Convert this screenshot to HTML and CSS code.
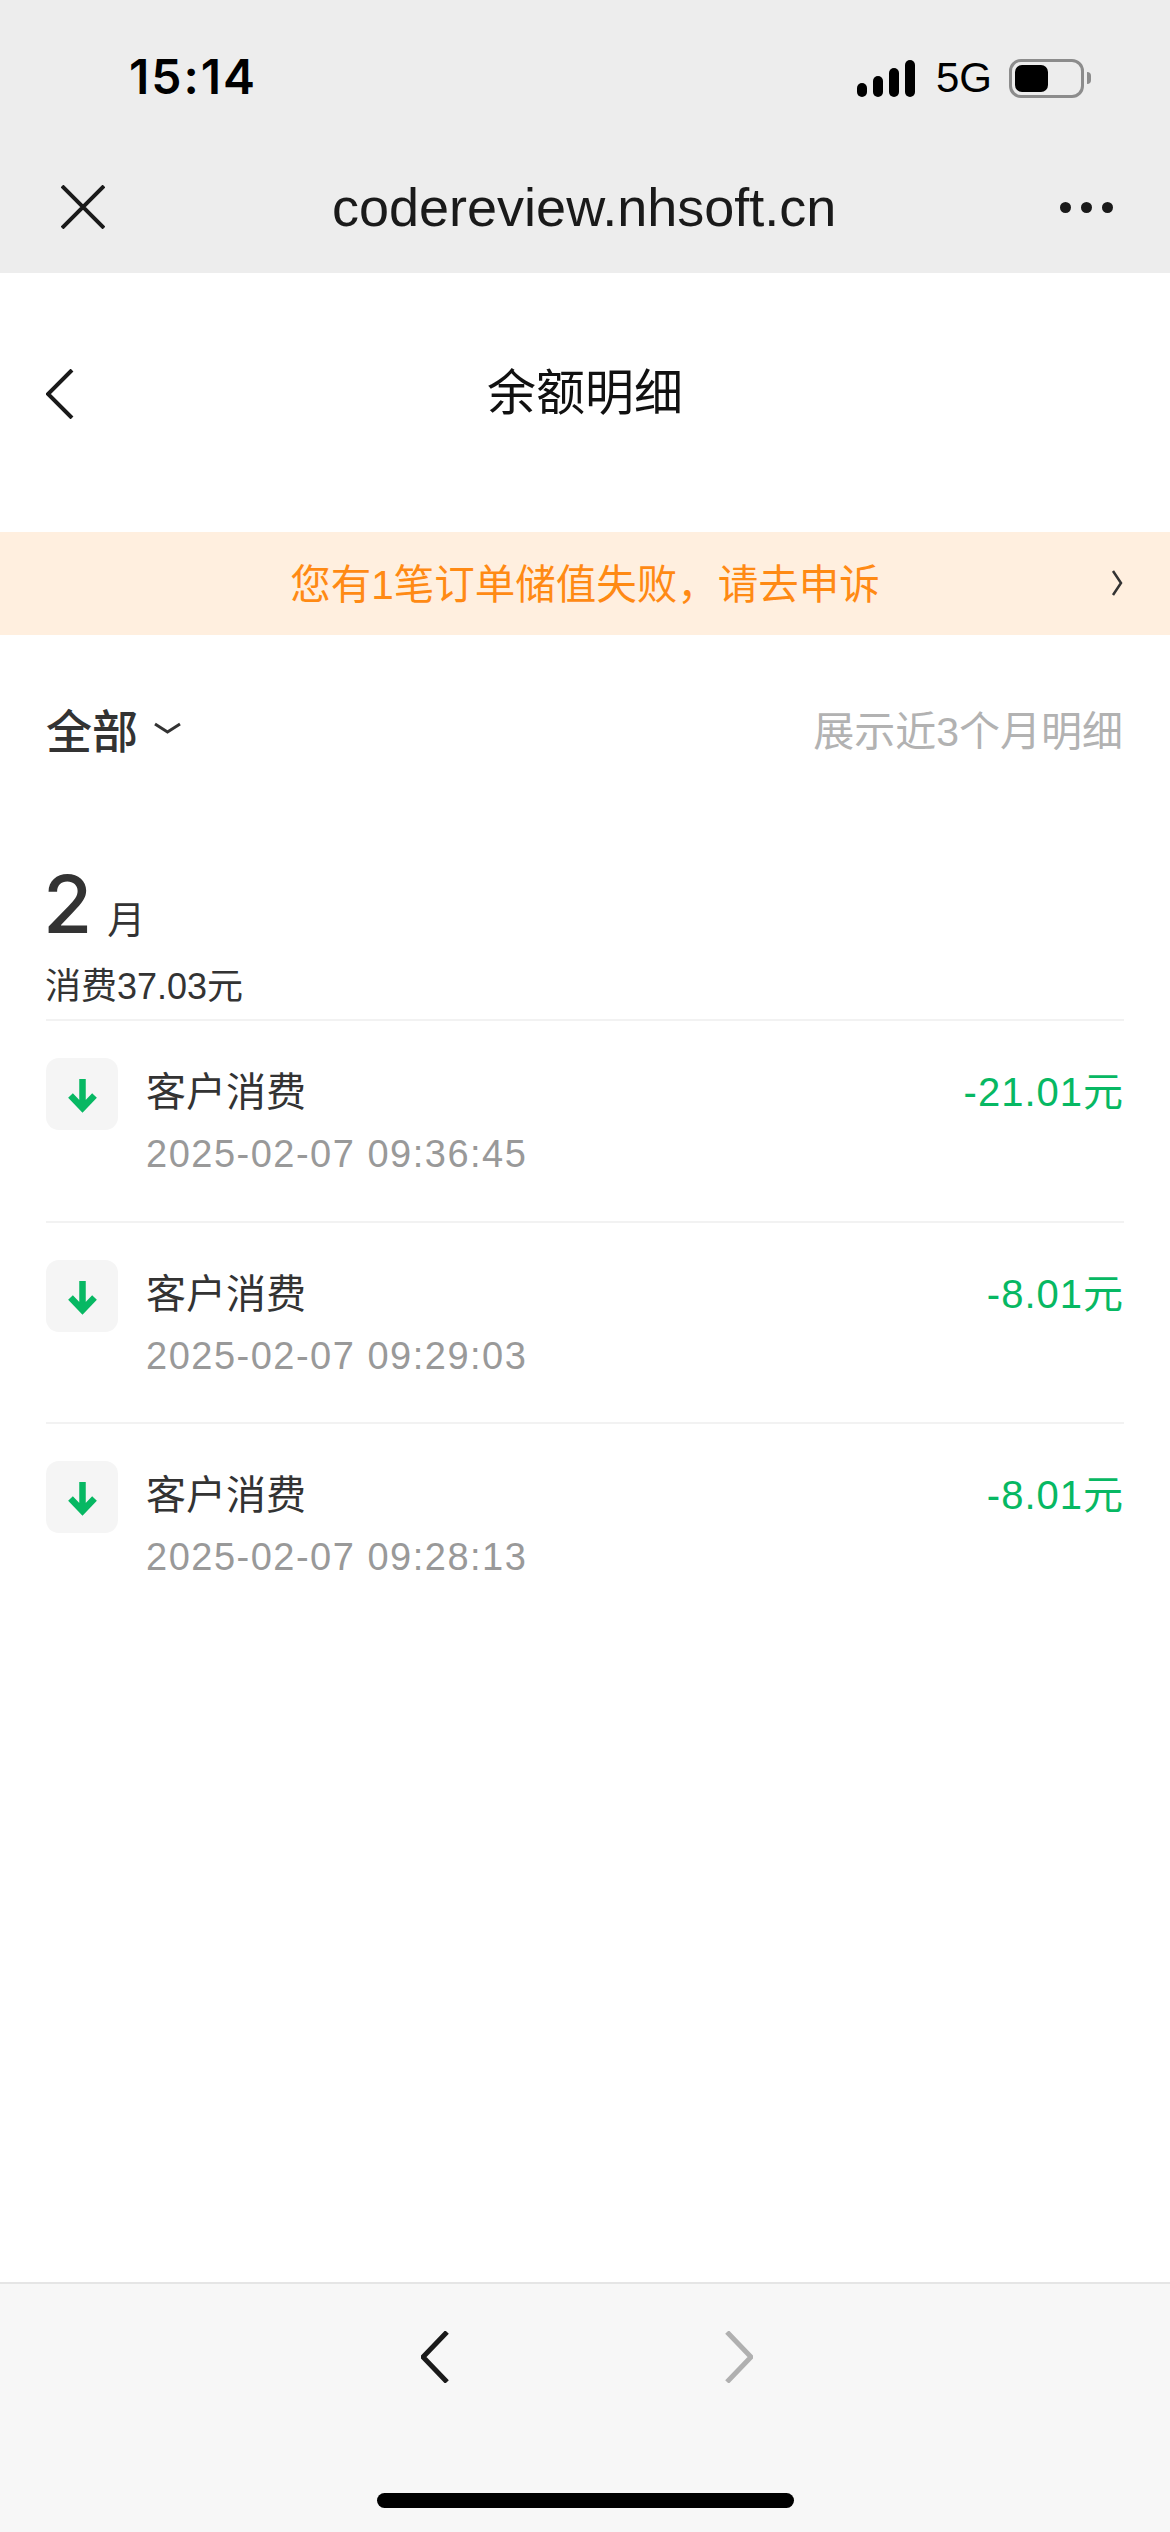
FILE: index.html
```html
<!DOCTYPE html>
<html lang="zh-CN">
<head>
<meta charset="utf-8">
<title>余额明细</title>
<link rel="stylesheet" href="styles.css">
</head>
<body>
<div class="app">
  <header class="browser-bar">
    <div class="status">
      <span class="clock">15:14</span>
      <div class="status-icons">
        <svg class="signal" width="58" height="37" viewBox="0 0 58 37"><rect x="0" y="23" width="10" height="14" rx="5"/><rect x="16" y="16" width="10" height="21" rx="5"/><rect x="32" y="8" width="10" height="29" rx="5"/><rect x="48" y="0" width="10" height="37" rx="5"/></svg>
        <span class="network">5G</span>
        <div class="battery"><div class="battery-body"><div class="battery-level"></div></div><div class="battery-nub"></div></div>
      </div>
    </div>
    <div class="urlbar">
      <svg class="close" width="44" height="44" viewBox="0 0 44 44"><path d="M1 1 43 43M43 1 1 43"/></svg>
      <span class="host">codereview.nhsoft.cn</span>
      <div class="dots"><i></i><i></i><i></i></div>
    </div>
  </header>

  <main class="page">
    <div class="title-bar">
      <svg class="back" width="28" height="50" viewBox="0 0 28 50"><path d="M26 1 2 25 26 49"/></svg>
      <h1>余额明细</h1>
    </div>

    <div class="notice">
      <span>您有1笔订单储值失败，请去申诉</span>
      <svg class="notice-arrow" width="12" height="26" viewBox="0 0 12 26"><path d="M2 1 10 13 2 25"/></svg>
    </div>

    <div class="filter">
      <div class="filter-pick"><span>全部</span><svg width="27" height="12" viewBox="0 0 27 12"><path d="M1 2 13.5 10 26 2"/></svg></div>
      <span class="filter-note">展示近3个月明细</span>
    </div>

    <section class="month">
      <div class="month-head"><span class="month-num">2</span><span class="month-unit">月</span></div>
      <div class="month-sum">消费37.03元</div>
    </section>

    <ul class="records">
      <li class="record">
        <div class="record-icon"><svg width="72" height="72" viewBox="0 0 72 72"><path d="M36.5 21V50M24.5 37.5 36.5 50 48.5 37.5"/></svg></div>
        <div class="record-text"><div class="record-name">客户消费</div><div class="record-time">2025-02-07 09:36:45</div></div>
        <div class="record-amount">-21.01元</div>
      </li>
      <li class="record">
        <div class="record-icon"><svg width="72" height="72" viewBox="0 0 72 72"><path d="M36.5 21V50M24.5 37.5 36.5 50 48.5 37.5"/></svg></div>
        <div class="record-text"><div class="record-name">客户消费</div><div class="record-time">2025-02-07 09:29:03</div></div>
        <div class="record-amount">-8.01元</div>
      </li>
      <li class="record">
        <div class="record-icon"><svg width="72" height="72" viewBox="0 0 72 72"><path d="M36.5 21V50M24.5 37.5 36.5 50 48.5 37.5"/></svg></div>
        <div class="record-text"><div class="record-name">客户消费</div><div class="record-time">2025-02-07 09:28:13</div></div>
        <div class="record-amount">-8.01元</div>
      </li>
    </ul>
  </main>

  <footer class="toolbar">
    <div class="toolbar-nav">
      <svg class="nav-prev" width="28" height="52" viewBox="0 0 28 52"><path d="M26 1 2 26 26 51"/></svg>
      <svg class="nav-next" width="28" height="52" viewBox="0 0 28 52"><path d="M2 1 26 26 2 51"/></svg>
    </div>
    <div class="home-bar"></div>
  </footer>
</div>
</body>
</html>
```

FILE: styles.css
```css
* { box-sizing: border-box; }
html, body { margin: 0; padding: 0; background: #fff; }
body { font-family: "Liberation Sans", "Noto Sans CJK SC", sans-serif; color: #333; }
ul { list-style: none; margin: 0; padding: 0; }
svg { display: block; fill: none; }

.app { width: 1170px; height: 2532px; display: flex; flex-direction: column; overflow: hidden; }

/* top browser chrome */
.browser-bar { height: 273px; background: #ededed; flex: none; }
.status { height: 156px; padding: 0 79px 3px 129px; display: flex; align-items: center; justify-content: space-between; }
.clock { font: 600 48px/1 Inter, sans-serif; color: #000; letter-spacing: 2px; }
.status-icons { display: flex; align-items: center; padding-top: 3px; }
.signal rect { fill: #000; }
.network { font: 400 42px/1 "Liberation Sans", sans-serif; color: #000; margin-left: 21px; }
.battery { display: flex; align-items: center; margin-left: 17px; }
.battery-body { width: 75px; height: 39px; border: 3px solid #8c8c8c; border-radius: 12px; padding: 3px; }
.battery-level { width: 33px; height: 27px; background: #000; border-radius: 7px; }
.battery-nub { width: 4px; height: 12px; margin-left: 3px; background: #8c8c8c; border-radius: 0 6px 6px 0; }

.urlbar { height: 102px; padding: 0 57px 0 61px; display: grid; grid-template-columns: 271px auto 1fr; align-items: center; }
.close path { stroke: #1a1a1a; stroke-width: 4; }
.host { font: 400 54px/1 "Liberation Sans", sans-serif; color: #1a1a1a; }
.dots { display: flex; gap: 10px; justify-self: end; }
.dots i { width: 11px; height: 11px; border-radius: 50%; background: #1a1a1a; }

/* page body */
.page { flex: 1; min-height: 0; }
.title-bar { height: 259px; padding: 0 0 18px 46px; display: flex; align-items: center; }
.title-bar h1 { flex: 1; margin: 0 0 0 -28px; padding-right: 46px; text-align: center; font-size: 49px; font-weight: 400; line-height: 1; color: #111; }
.back path { stroke: #1a1a1a; stroke-width: 4; }

.notice { height: 103px; background: #ffefdf; padding: 0 46px 5px; display: flex; align-items: center; position: relative; color: #ff8a14; font-size: 40.5px; justify-content: center; }
.notice-arrow { position: absolute; right: 47px; top: 38px; }
.notice-arrow path { stroke: #333; stroke-width: 2.5; }

.filter { height: 189px; padding: 0 47px 3px 46px; display: flex; align-items: center; justify-content: space-between; }
.filter-pick { display: flex; align-items: center; gap: 16px; font-size: 46px; font-weight: 500; color: #333; }
.filter-pick path { stroke: #333; stroke-width: 3; }
.filter-note { font-size: 41px; color: #b2b2b2; }

.month { padding: 21px 46px 8px; }
.month-head { display: flex; align-items: baseline; gap: 15px; height: 118px; margin-left: -3px; }
.month-num { font: 500 80px/118px Inter, sans-serif; color: #333; }
.month-unit { font-size: 38px; color: #333; }
.month-sum { font-size: 36px; line-height: 48px; color: #333; margin-left: -1px; }

.records { padding: 0 46px; }
.record { height: 201.5px; padding-top: 37px; border-top: 2px solid #f2f2f2; display: flex; align-items: flex-start; }
.record-icon { width: 72px; height: 72px; background: #f5f5f5; border-radius: 13px; flex: none; }
.record-icon path { stroke: #07b863; stroke-width: 6.5; }
.record-text { margin: 6px 0 0 28px; flex: 1; }
.record-name { font-size: 40px; line-height: 56px; color: #333; }
.record-time { font-size: 38px; line-height: 48px; margin-top: 10px; color: #999; letter-spacing: 1.5px; }
.record-amount { font-size: 40px; line-height: 56px; margin-top: 6px; color: #07b863; letter-spacing: 1px; }

/* bottom toolbar */
.toolbar { height: 250px; flex: none; background: #f7f7f7; border-top: 2px solid #e5e5e5; }
.toolbar-nav { display: flex; justify-content: center; gap: 276px; padding-top: 47px; height: 209px; margin-left: 3px; }
.nav-prev path { stroke: #1a1a1a; stroke-width: 5; }
.nav-next path { stroke: #b0b0b0; stroke-width: 5; }
.home-bar { width: 417px; height: 15px; margin: 0 auto; background: #000; border-radius: 8px; }
```
